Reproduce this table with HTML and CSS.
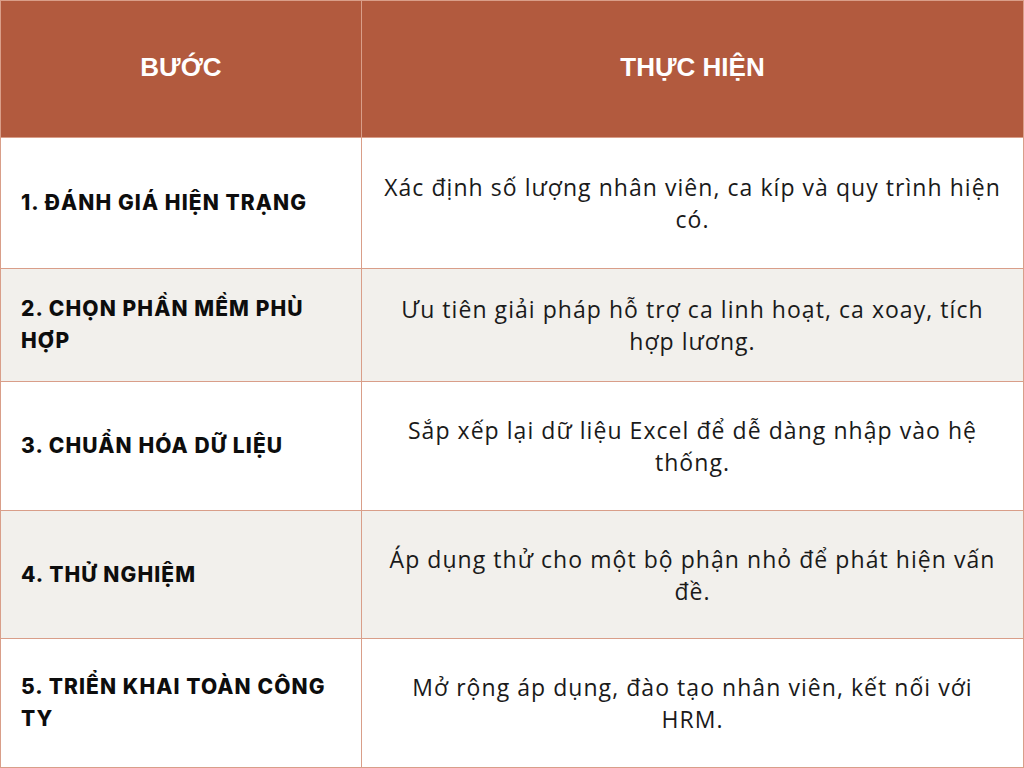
FILE: index.html
```html
<!DOCTYPE html>
<html lang="vi">
<head>
<meta charset="utf-8">
<link rel="stylesheet" href="styles.css">
</head>
<body>
<div class="table">
  <div class="cell head">BƯỚC</div>
  <div class="cell head">THỰC HIỆN</div>

  <div class="cell step">1. ĐÁNH GIÁ HIỆN TRẠNG</div>
  <div class="cell desc">Xác định số lượng nhân viên, ca kíp và quy trình hiện<br>có.</div>

  <div class="cell step alt">2. CHỌN PHẦN MỀM PHÙ HỢP</div>
  <div class="cell desc alt">Ưu tiên giải pháp hỗ trợ ca linh hoạt, ca xoay, tích<br>hợp lương.</div>

  <div class="cell step">3. CHUẨN HÓA DỮ LIỆU</div>
  <div class="cell desc">Sắp xếp lại dữ liệu Excel để dễ dàng nhập vào hệ<br>thống.</div>

  <div class="cell step alt">4. THỬ NGHIỆM</div>
  <div class="cell desc alt">Áp dụng thử cho một bộ phận nhỏ để phát hiện vấn<br>đề.</div>

  <div class="cell step">5. TRIỂN KHAI TOÀN CÔNG TY</div>
  <div class="cell desc">Mở rộng áp dụng, đào tạo nhân viên, kết nối với<br>HRM.</div>
</div>
</body>
</html>
```

FILE: styles.css
```css
html, body {
  margin: 0;
  padding: 0;
  background: #ffffff;
}
.table {
  width: 1024px;
  height: 768px;
  box-sizing: border-box;
  padding: 1px;
  gap: 1px;
  background: #d99e89;
  display: grid;
  grid-template-columns: 360px 1fr;
  grid-template-rows: 136px 130px 112px 128px 127px 128px;
}
.cell {
  display: flex;
  align-items: center;
  background: #ffffff;
  color: #111111;
}
.cell.alt {
  background: #f2f0ec;
}
.head {
  background: #b25a3e;
  color: #ffffff;
  justify-content: center;
  font-family: "Liberation Sans", Arial, sans-serif;
  font-weight: 700;
  font-size: 26px;
  padding-bottom: 3px;
  box-sizing: border-box;
}
.step {
  padding: 0 20px;
  font-family: Inter, "Noto Sans", sans-serif;
  font-weight: 800;
  font-size: 21px;
  letter-spacing: 1.1px;
  line-height: 32px;
  color: #0d0d0d;
}
.desc {
  justify-content: center;
  text-align: center;
  padding: 0 4px;
  font-family: "Open Sans", "Noto Sans", sans-serif;
  font-weight: 400;
  font-size: 23px;
  letter-spacing: 1.05px;
  line-height: 32px;
  color: #1a1a1a;
  white-space: nowrap;
}
```
